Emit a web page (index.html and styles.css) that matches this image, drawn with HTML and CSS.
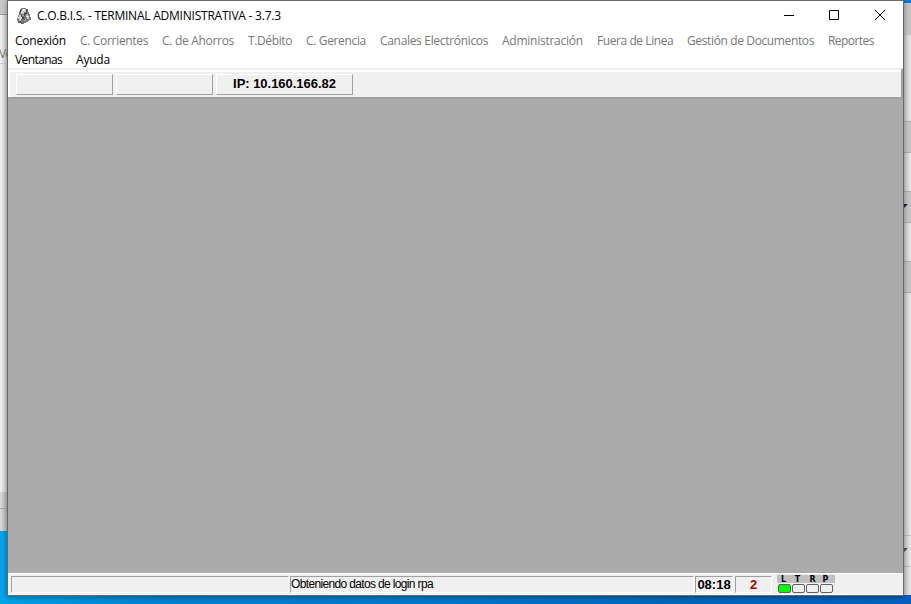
FILE: index.html
```html
<!DOCTYPE html>
<html lang="es">
<head>
<meta charset="utf-8">
<title>C.O.B.I.S.</title>
<link rel="stylesheet" href="styles.css">
</head>
<body>
<div class="desktop">
  <div class="behind-left"><div class="bl-head"></div><div class="bl-tab">Ve</div><div class="bl-body"></div><div class="bl-foot"></div><div class="bl-foot last"></div></div>
  <main class="window">
    <header class="titlebar">
      <svg class="app-icon" width="16" height="18" viewBox="0 0 16 18" shape-rendering="crispEdges">
        <path fill="#777" d="M5 1h5v1h2v3h1v2h1v3h1v3h-2v1h-1v1h-2v1H8v1H5v-1H2v-2H1v-3h1V8h1V4h1V2h1z"/>
        <path fill="#ccc" d="M6 2h4v3H8v2H5V4h1zM3 8h2v2h2v2H5v2H3v-2H2v-2h1zM11 7h1v2h1v3h-2v-2h-1V8h1z"/>
        <path fill="#aaa" d="M8 12h2v2H8zM6 8h2v1H6z"/>
        <path fill="#444" d="M4 3h1v2H4zM10 2h1v3h-1zM8 6h3v1H9v2H8zM5 8h1v2h2v2h1v1H8v-1H6v-2H5zM3 14h2v1h1v1H5v-1H3z"/>
        <path fill="#fff" d="M7 2h2v2H7zM4 10h1v1H4zM11 9h1v1h-1z"/>
      </svg>
      <h1 class="title">C.O.B.I.S. - TERMINAL ADMINISTRATIVA - 3.7.3</h1>
      <div class="controls">
        <svg width="10" height="10" viewBox="0 0 10 10"><path d="M0 5.500h10"/></svg>
        <svg width="10" height="10" viewBox="0 0 10 10"><path d="M.5.5h9v9h-9z"/></svg>
        <svg class="close" width="10" height="10" viewBox="0 0 10 10"><path d="M0 0l10 10M10 0L0 10"/></svg>
      </div>
    </header>
    <nav class="menu">
      <span class="m on m1">Conexión</span><span class="m m2">C. Corrientes</span><span class="m m3">C. de Ahorros</span><span class="m m4">T.Débito</span><span class="m m5">C. Gerencia</span><span class="m m6">Canales Electrónicos</span><span class="m m7">Administración</span><span class="m m8">Fuera de Linea</span><span class="m m9">Gestión de Documentos</span><span class="m m10">Reportes</span><span class="m on m11">Ventanas</span><span class="m on m12">Ayuda</span>
    </nav>
    <div class="toolbar">
      <div class="panel"></div><div class="panel"></div><div class="panel ip">IP: 10.160.166.82</div>
    </div>
    <section class="workspace"></section>
    <footer class="status">
      <div class="cell empty"></div>
      <div class="cell message"><span>Obteniendo datos de login rpa</span></div>
      <div class="cell time"><span>08:18</span></div>
      <div class="cell count">2</div>
      <div class="leds">
        <div class="led-names"><span>L</span><span>T</span><span>R</span><span>P</span></div>
        <div class="led-row"><i class="lit"></i><i></i><i></i><i></i></div>
      </div>
    </footer>
  </main>
  <div class="behind-right"><svg width="7" height="596" viewBox="0 0 7 596">
    <path fill="#0879df" d="M0 0h7v3H0z"/>
    <path fill="#c5c5c8" d="M0 3h7v32H0zM0 122h7v30H0zM0 192h7v30H0zM0 262h7v30H0z"/>
    <path stroke="#aaaaad" d="M0 121.500h7M0 152.500h7M0 191.500h7M0 222.500h7M0 261.500h7M0 292.500h7"/>
    <path stroke="#b5bcc3" d="M0 535.500h7M0 566.500h7"/>
    <path fill="#202838" d="M0 204h4L0 208z"/><path fill="#555" d="M0 548h4L0 552z"/>
    <path fill="#075dba" d="M0 595h7v1H0z"/>
  </svg></div>
</div>
</body>
</html>
```

FILE: styles.css
```css
* { box-sizing: border-box; }
body { margin: 0; overflow: hidden; }
.desktop {
  width: 911px; height: 604px;
  display: grid; grid-template: 596px 8px / 7px 897px 7px;
  background: linear-gradient(90deg, #00a3e8 0, #0083d0 150px, #007ac8 420px, #0065b8 700px, #0560be 911px);
}
.behind-left { display: flex; flex-direction: column; height: 531px; background: linear-gradient(90deg, #f2f2f2, #cfcfcf); overflow: hidden; }
.bl-head { flex: 0 0 15px; background: #c8c8c8; border-bottom: 1px solid #999; }
.bl-tab { flex: 0 0 49px; padding-top: 31px; font: 12px/16px "Open Sans", sans-serif; letter-spacing: -1px; text-indent: -1px; color: #777; border-bottom: 1px solid #ccc; }
.bl-body { flex: 0 0 428px; }
.bl-foot { flex: 0 0 17px; background: linear-gradient(90deg, #dadada, #b8b8b8); border-bottom: 1px solid #aaa; }
.bl-foot.last { flex-basis: 22px; border: 0; }
.behind-right { background: linear-gradient(90deg, #ccc, #e6e6e6); }
.behind-right svg { display: block; }
.window { display: flex; flex-direction: column; border: 1px solid #696969; background: #fff; box-shadow: 0 1px 5px #0006; z-index: 1; }
.titlebar { height: 29px; display: flex; align-items: flex-start; padding: 6px 18px 0 8px; }
.app-icon { flex: none; }
.title { margin: 0 0 0 5px; font: 12px/18px "Open Sans", sans-serif; letter-spacing: -.23px; white-space: nowrap; color: #000; }
.controls { margin-left: auto; display: flex; gap: 35px; padding-top: 3px; }
.controls svg { fill: none; stroke: #000; stroke-width: 1; }
.controls .close { margin-left: 1px; }
.menu { height: 38px; display: flex; flex-wrap: wrap; align-content: flex-start; column-gap: 14px; padding: 1px 7px 0; font: 12px/19px "Open Sans", sans-serif; color: #777; }
.m { white-space: nowrap; height: 19px; }
.m.on { color: #000; }
.m1 { width: 51px; letter-spacing: -.25px; }
.m2 { width: 68px; letter-spacing: -.32px; }
.m3 { width: 72px; letter-spacing: -.3px; }
.m4 { width: 44px; letter-spacing: -.37px; }
.m5 { width: 60px; letter-spacing: -.35px; }
.m6 { width: 108px; letter-spacing: -.32px; }
.m7 { width: 81px; letter-spacing: -.25px; }
.m8 { width: 76px; letter-spacing: -.43px; }
.m9 { width: 127px; letter-spacing: -.37px; }
.m10 { width: 53px; letter-spacing: -.55px; }
.m11 { width: 47px; letter-spacing: -.6px; }
.m12 { letter-spacing: -.2px; }
.toolbar { height: 30px; display: flex; gap: 3px; padding: 4px 7px 0 8px; background: #f0f0f0; border-top: 2px solid #efefef; border-right: 2px solid #a0a0a0; border-bottom: 1px solid #a0a0a0; box-shadow: inset 0 2px #fff, inset 2px 0 #fff; }
.panel { width: 97px; height: 21px; border: 1px solid; border-color: #fff #a0a0a0 #a0a0a0 #fff; }
.ip { width: 137px; text-align: center; font: bold 13px/18px "Liberation Sans", sans-serif; letter-spacing: -.03px; }
.workspace { flex: 1; background: #ababab; border-top: 1px solid #a0a0a0; }
.status { height: 22px; display: flex; padding: 2px 0 0 3px; background: #f0f0f0; border-top: 1px solid #fff; border-bottom: 1px solid #fff; }
.cell { height: 17px; border: 1px solid; border-color: #a0a0a0 #fff #fff #a0a0a0; white-space: nowrap; }
.empty { width: 278px; margin-right: 1px; }
.message { width: 404px; margin-right: 1px; font: 12px/15px "Liberation Sans", sans-serif; }
.message span { letter-spacing: -.65px; }
.time { width: 38px; margin-right: 2px; font: bold 13px/15px "Liberation Sans", sans-serif; text-align: center; }
.count { width: 37px; margin-right: 5px; color: #b00000; font: bold 13px/15px "Liberation Sans", sans-serif; text-align: center; }
.leds { width: 58px; margin-top: -1px; }
.led-names { height: 8px; display: flex; background: #c0c0c0; font: bold 8px/9px "DejaVu Sans", sans-serif; padding-right: 2px; }
.led-names span { width: 14px; text-align: center; text-indent: -1px; }
.led-names span:nth-child(3) { text-indent: 1px; }
.led-row { display: flex; gap: 1px; padding: 1px 0 0 1px; }
.led-row i { width: 13px; height: 9px; border: 1px solid #606060; border-radius: 2px; background: #f0f0f0; }
.led-row .lit { background: #0f0; }
```
